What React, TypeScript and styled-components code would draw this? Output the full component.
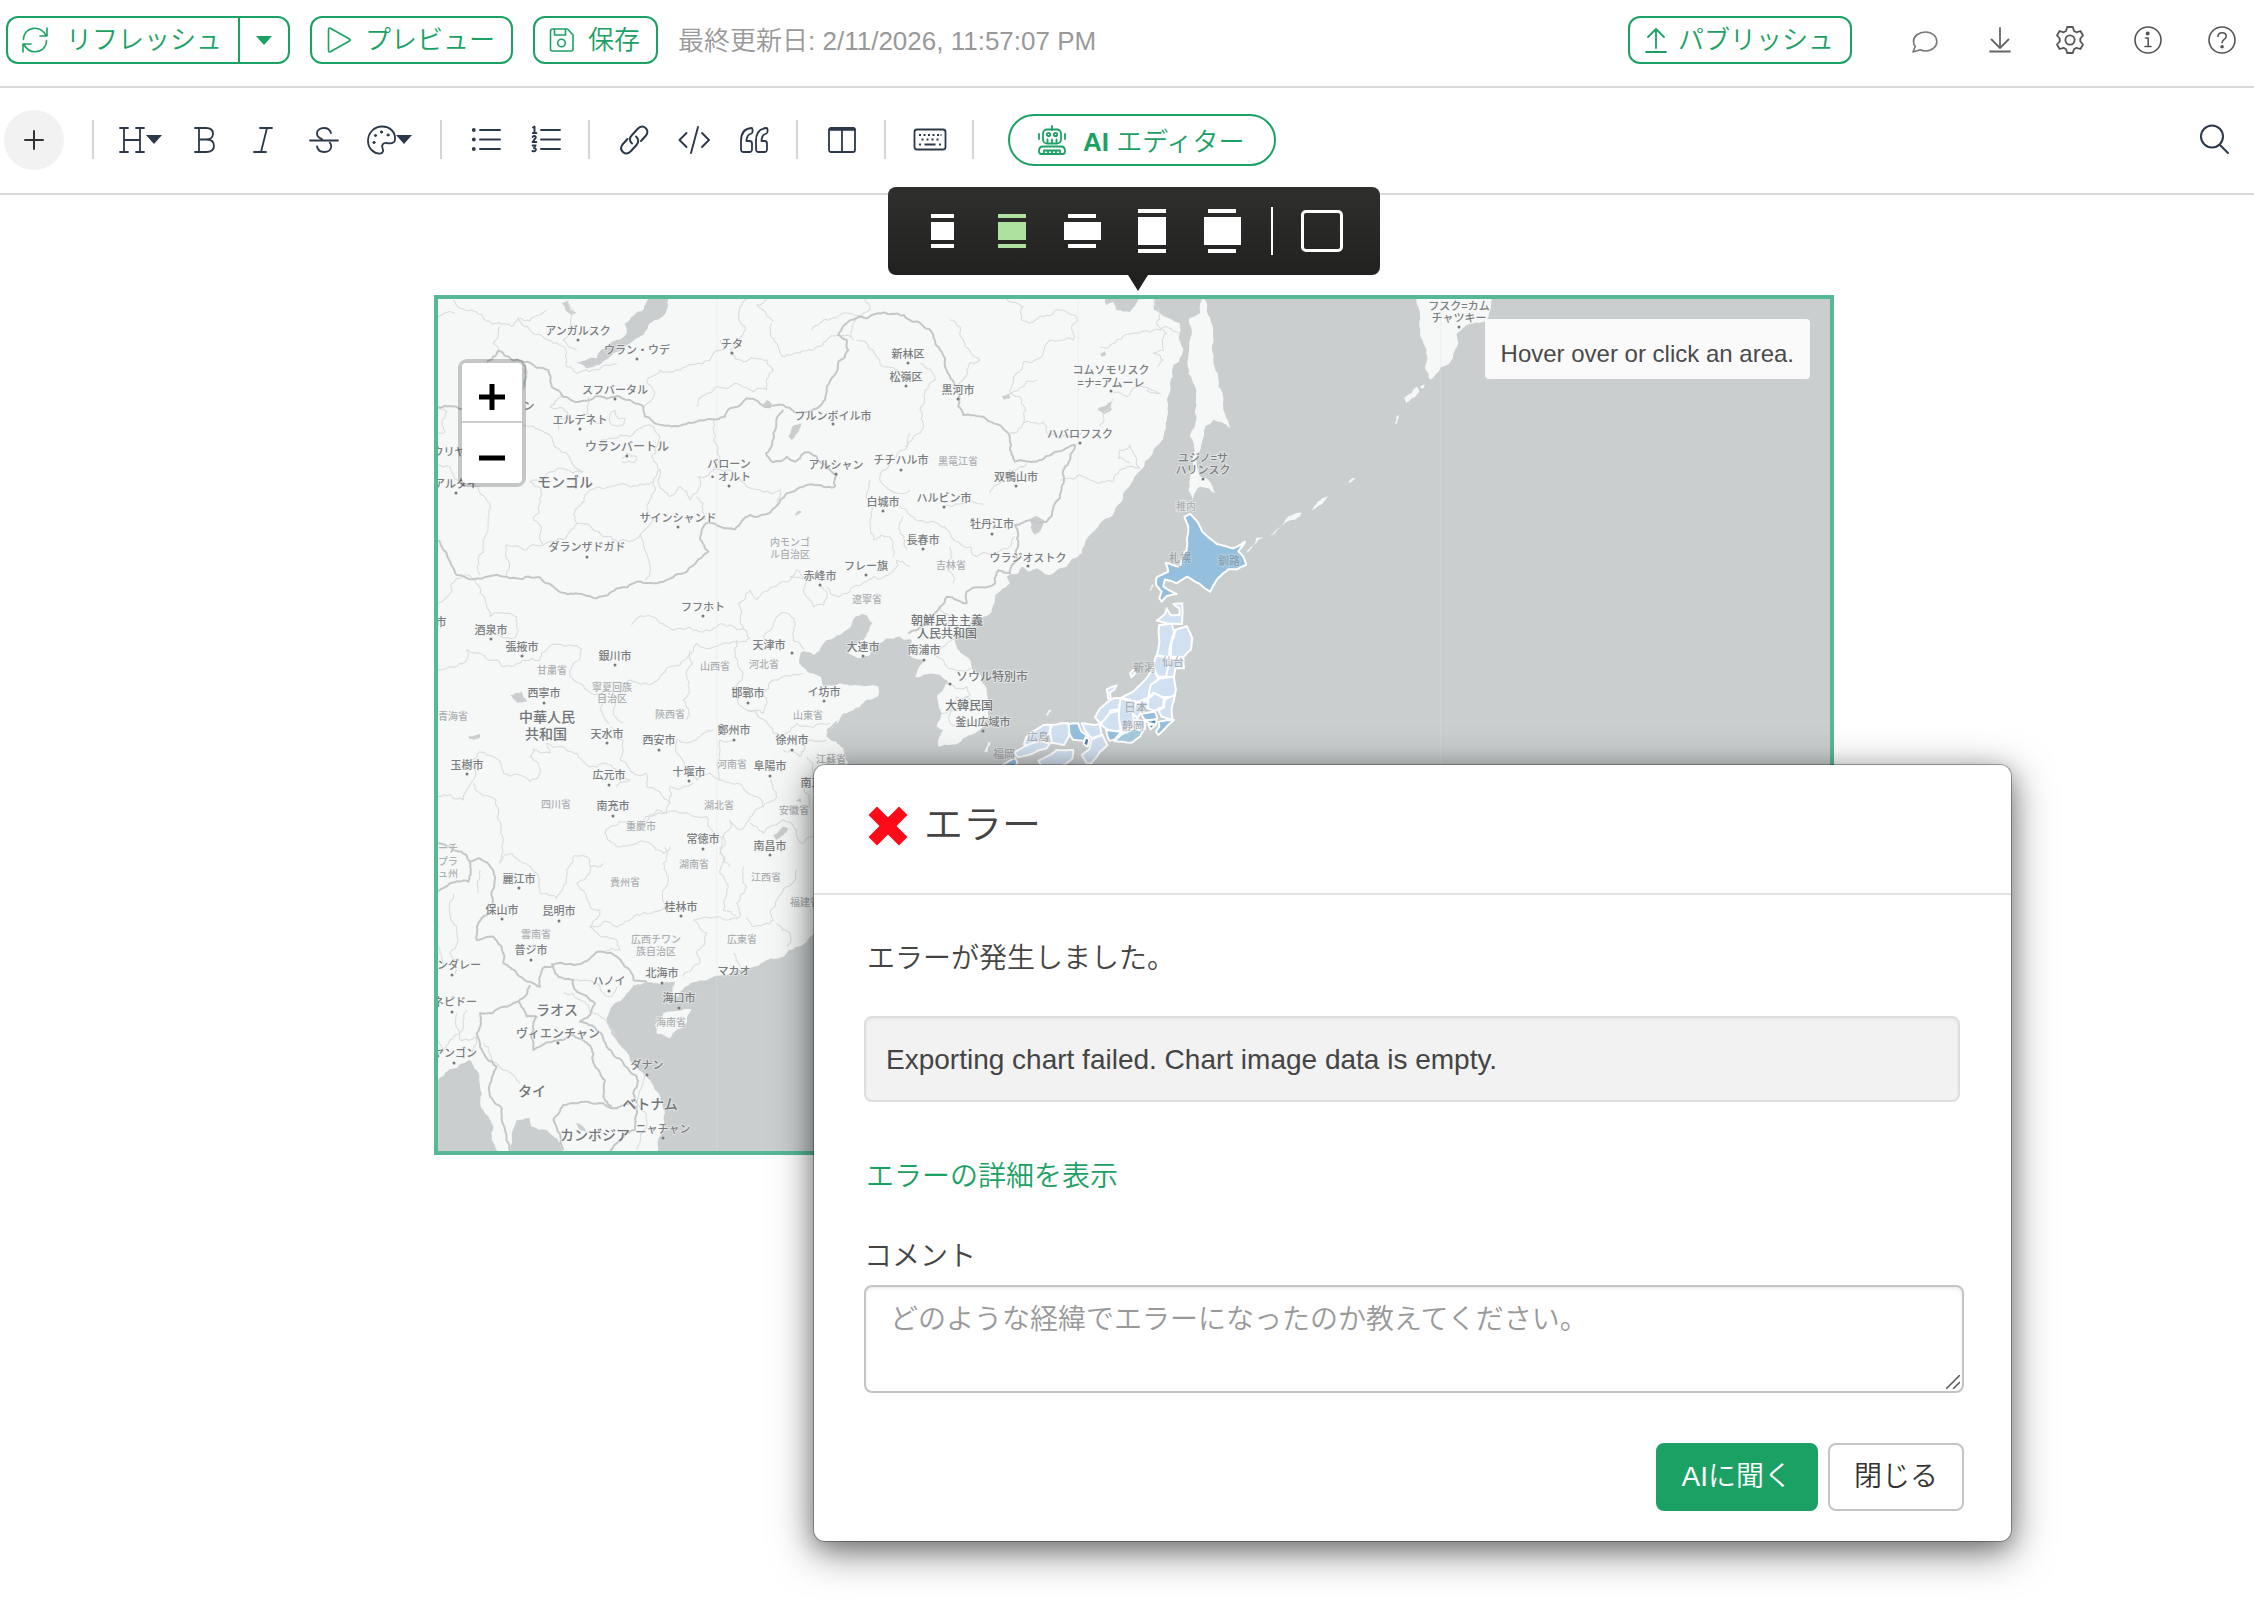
import React from "react";
import styled, { createGlobalStyle, css } from "styled-components";

const GREEN = "#1ca165";
const INK = "#2b3849";

const GlobalStyle = createGlobalStyle`
  *, *::before, *::after { box-sizing: border-box; }
  body {
    margin: 0;
    background: #fff;
    color: #444;
    font-family: "Liberation Sans", "Noto Sans CJK JP", sans-serif;
    font-size: 28px;
    font-weight: 350;
  }
  button, textarea { font: inherit; }
  button { cursor: pointer; }
`;

/* ---------- Icons ---------- */

const Svg = styled.svg`
  display: block;
  flex: none;
  overflow: visible;
  fill: none;
  stroke: currentColor;
  stroke-linecap: round;
  stroke-linejoin: round;
`;

type IconProps = { children: React.ReactNode; w?: number; h?: number; sw?: number };
const Icon = ({ children, w = 28, h = 28, sw = 2 }: IconProps) => (
  <Svg width={w} height={h} viewBox={`0 0 ${w} ${h}`} strokeWidth={sw} aria-hidden="true">
    {children}
  </Svg>
);

const RefreshIcon = () => (
  <Icon w={26} h={26} sw={1.6}>
    <path d="M1.5 12.5C1.500 5.500 7 1.200 13 1.200c5 0 8.500 2.600 11 7.300M25 1v8h-7" />
    <path d="M24.500 13.500c0 7-5.500 11.300-11.500 11.300-5 0-8.500-2.600-11-7.300M1 25v-8h8" />
  </Icon>
);
const PlayIcon = () => (
  <Icon w={26} h={26} sw={1.6}>
    <path d="M2.500 2.200v21.600c0 1 1 1.500 1.800 1L23.500 14c.9-.5.9-1.500 0-2L4.300 1.200c-.8-.5-1.800 0-1.800 1z" />
  </Icon>
);
const SaveIcon = () => (
  <Icon w={26} h={26} sw={1.6}>
    <path d="M3.500 2h15l5.500 6v14a2 2 0 0 1-2 2H3.500a2 2 0 0 1-2-2V4a2 2 0 0 1 2-2zM5.500 2v6h11V2" />
    <circle cx="12.500" cy="16" r="3.800" />
  </Icon>
);
const UploadIcon = () => (
  <Icon w={26} h={26} sw={1.8}>
    <path d="M12 2v19M4 10l8-8 8 8M2 25h20" />
  </Icon>
);
const CommentIcon = () => (
  <Icon sw={1.6}>
    <path d="M13.500 6c6.600 0 11.300 4.200 11.300 9.400S20 25 13.500 25c-2 0-3.800-.4-5.300-1.200L1 26l2.200-5.500C2 19 1.500 17.300 1.500 15.400 1.500 10.200 6.900 6 13.500 6z" />
  </Icon>
);
const DownloadIcon = () => (
  <Icon sw={1.8}>
    <path d="M14 2v20M5.500 13.500L14 22l8.500-8.500M4 25.500h20" />
  </Icon>
);
const GearIcon = () => (
  <Icon sw={1.8}>
    <path d="M7.200 1h5.600l1.200 4 2.400 1.300 4-1.300 2.600 4.500-2.700 3v3l2.700 3-2.600 4.500-4-1.200-2.400 1.400-1.200 3.800H7.200L6 23.200l-2.400-1.400-4 1.200L-3 18.500l2.700-3v-3l-2.700-3L-.4 5l4 1.300L6 5z" />
    <circle cx="10" cy="14" r="4.600" />
  </Icon>
);
const InfoIcon = () => (
  <Icon sw={1.6}>
    <circle cx="14" cy="14" r="13" />
    <circle cx="13.700" cy="7.500" r="1.200" fill="currentColor" />
    <path d="M11.500 12h2.700v8M11 20.500h6" />
  </Icon>
);
const HelpIcon = () => (
  <Icon sw={1.6}>
    <circle cx="14" cy="14" r="13" />
    <path d="M10 10.500c0-2.300 1.700-3.700 4-3.700s4.200 1.400 4.200 3.600c0 3-4.100 3.200-4.100 6.300" />
    <circle cx="14.100" cy="20.700" r="1" fill="currentColor" />
  </Icon>
);
const SearchIcon = () => (
  <Icon sw={2}>
    <circle cx="12" cy="10.500" r="11" />
    <path d="M20 19l8 8" />
  </Icon>
);
const PlusIcon = () => (
  <Icon w={18} h={18} sw={2}>
    <path d="M9 0v18M0 9h18" />
  </Icon>
);
const CaretIcon = () => (
  <Icon w={16} h={9} sw={0}>
    <path d="M0 0h16L8 9z" fill="currentColor" />
  </Icon>
);
const HeadingIcon = () => (
  <Icon sw={1.8}>
    <path d="M4 2h8M20 2h8M4 26h8M20 26h8M8 2v24M24 2v24M8 14h16" />
  </Icon>
);
const BoldIcon = () => (
  <Icon sw={1.8}>
    <path d="M3 2h11c4 0 7 2 7 5.700S18 13.500 14 13.500H7M14 13.500c5 0 8 2.300 8 6.200S19 26 14 26H3M7 2v24" />
  </Icon>
);
const ItalicIcon = () => (
  <Icon sw={1.8}>
    <path d="M10 2h12M4 26h12M17 2l-6 24" />
  </Icon>
);
const StrikeIcon = () => (
  <Icon sw={1.8}>
    <path d="M2 14.500h28M23 7c-1-3.300-3.600-5-7-5-4 0-7 2.200-7 5.500 0 3 2.300 4.600 5 5.500M9 20.500c.7 3.600 3.300 5.500 7.200 5.500 4 0 7-2.200 7-5.800 0-1.700-.6-2.700-1.500-3.500" />
  </Icon>
);
const PaletteIcon = () => (
  <Icon sw={1.8}>
    <path d="M16 .5C8 .5 2 7 2 15c0 7.500 6 13 12.500 12.500 3-.3 3-3 2-5.500-1.200-3 1-5.500 4-5 3 .4 8 1 8.500-3C29.800 6 24 .5 16 .5z" />
    <g fill="currentColor" strokeWidth="1">
      <circle cx="8" cy="16.500" r="1.100" />
      <circle cx="9.500" cy="9.500" r="1.100" />
      <circle cx="15.500" cy="6" r="1.100" />
      <circle cx="22" cy="9" r="1.100" />
    </g>
  </Icon>
);
const BulletsIcon = () => (
  <Icon sw={1.9}>
    <path d="M8 4h20M8 13.500h20M8 23h20" />
    <g fill="currentColor" stroke="none">
      <circle cx="1.800" cy="4" r="1.900" />
      <circle cx="1.800" cy="13.500" r="1.900" />
      <circle cx="1.800" cy="23" r="1.900" />
    </g>
  </Icon>
);
const NumbersIcon = () => (
  <Icon sw={1.9}>
    <path d="M9 4h19M9 13.500h19M9 23h19" />
    <path d="M1 1.500l1.500-1v6M.8 7h3.600M.6 11c.6-1.500 3.600-1.200 3.200.6L.6 16h3.800M.6 19.500h3l-1.600 2.600c2.800 0 2.500 4-1.600 2.900" />
  </Icon>
);
const LinkIcon = () => (
  <Icon sw={2}>
    <path d="M12 17.500c-3-2.500-2.500-6 0-8.500l6-6.500c5.500-5 12 1.500 8 7l-5 5.500" />
    <path d="M16 10.500c3 2.500 2.800 6 .5 8.500l-6 6.500c-5.500 5-12-1.500-8-7l5-5.500" />
  </Icon>
);
const CodeIcon = () => (
  <Icon sw={1.9}>
    <path d="M6.500 7L-.500 14l7 7M22 7l7 7-7 7M18 1l-7 26" />
  </Icon>
);
const QuoteIcon = () => (
  <Icon sw={1.8}>
    <path d="M11.500 2C4 2.500 1 8 1 15v8.500A2.500 2.500 0 0 0 3.500 26h6a2.500 2.500 0 0 0 2.500-2.500v-6A2.500 2.500 0 0 0 9.500 15H6.500c0-4 1-6.500 5-7.500 1.500-.5 1.500-5.500 0-5.500z" />
    <path d="M26.500 2C19 2.500 16 8 16 15v8.500a2.500 2.500 0 0 0 2.500 2.500h6a2.500 2.500 0 0 0 2.500-2.500v-6a2.500 2.500 0 0 0-2.500-2.500h-3c0-4 1-6.500 5-7.500 1.500-.5 1.500-5.500 0-5.500z" />
  </Icon>
);
const ColumnsIcon = () => (
  <Icon sw={1.8}>
    <rect x="1" y="2" width="26" height="24" rx="2" />
    <path d="M14 3v23" />
    <path d="M2 3.200h24" strokeWidth="3" />
  </Icon>
);
const KeyboardIcon = () => (
  <Icon sw={1.8}>
    <rect x="-1.500" y="3.500" width="31" height="20" rx="2.500" />
    <path d="M3 9h2M7.500 9h2M12 9h2M16.500 9h2M21 9h2M24.500 9h1M5.500 13.500h2M10.500 13.500h2M15.500 13.500h2M20.500 13.500h2M3 18.500h2M8.500 18.500h11M23 18.500h2" strokeWidth="2.200" strokeLinecap="butt" />
  </Icon>
);
const RobotIcon = () => (
  <Icon w={28} h={30} sw={1.800}>
    <path d="M14 1v4M1 9v5M27 9v5" />
    <rect x="5" y="4.500" width="18" height="14" rx="4" />
    <circle cx="10.500" cy="9.500" r="1.700" />
    <circle cx="17.500" cy="9.500" r="1.700" />
    <path d="M9.500 14.500v3M14 14.500v3M18.500 14.500v3" />
    <path d="M5 21.500h18c2.500 0 4 2 4 4.500s-1 3-2 3H3c-1 0-2-.5-2-3s1.500-4.500 4-4.500z" />
    <path d="M6 28.500V25.500h16v3M10 25.500v3M14 25.500v3M18 25.500v3" />
  </Icon>
);
const CrossIcon = () => (
  <Icon w={40} h={40} sw={0}>
    <path fill="#ff0a18" d="M9 .5l11 11 11-11L39.500 9l-11 11 11 11L31 39.500l-11-11-11 11L.5 31l11-11L.5 9z" />
  </Icon>
);

/* ---------- Header ---------- */

const Page = styled.div`
  min-height: 100vh;
`;

const TopBar = styled.header`
  display: flex;
  align-items: center;
  gap: 20px;
  padding: 16px 18px 22px 6px;
  border-bottom: 2px solid #d9d9d9;
  font-size: 26px;
  line-height: 46px;
`;

const outlined = css`
  border: 2px solid ${GREEN};
  background: #fff;
  color: ${GREEN};
`;

const OutlineButton = styled.button<{ $gap?: number }>`
  ${outlined}
  display: flex;
  align-items: center;
  height: 48px;
  gap: ${(p) => p.$gap ?? 13}px;
  padding: 0 16px 0 14px;
  border-radius: 12px;
  white-space: nowrap;
`;

const SplitButton = styled.div`
  display: flex;
  & > :first-child { border-radius: 12px 0 0 12px; border-right: 0; }
`;

const SplitCaret = styled.button`
  ${outlined}
  display: flex;
  align-items: center;
  justify-content: center;
  width: 52px;
  height: 48px;
  padding: 0;
  border-radius: 0 12px 12px 0;
`;

const Updated = styled.span`
  padding-top: 2px;
  color: #999;
  white-space: nowrap;
`;

const TopActions = styled.div`
  display: flex;
  align-items: center;
  gap: 46px;
  margin-left: auto;
`;

const PublishSlot = styled.div`
  margin-right: 14px;
`;

const IconButton = styled.button<{ $tone?: string }>`
  display: flex;
  align-items: center;
  gap: 2px;
  padding: 0;
  border: 0;
  background: none;
  color: ${(p) => p.$tone ?? INK};
`;

/* ---------- Format toolbar ---------- */

const Toolbar = styled.div`
  display: flex;
  align-items: center;
  height: 107px;
  padding: 0 26px 2px 4px;
  border-bottom: 2px solid #d9d9d9;
`;

const AddButton = styled.button`
  display: flex;
  align-items: center;
  justify-content: center;
  width: 60px;
  height: 60px;
  border: 0;
  border-radius: 50%;
  background: #f2f2f2;
  color: #333;
`;

const ToolGroup = styled.div<{ $gap?: number }>`
  display: flex;
  align-items: center;
  gap: ${(p) => p.$gap ?? 32}px;
`;

const Separator = styled.span<{ $after?: number }>`
  width: 2px;
  height: 39px;
  margin: 0 ${(p) => p.$after ?? 30}px 0 28px;
  background: #d4d4d4;
`;

const AiButton = styled.button`
  ${outlined}
  display: flex;
  align-items: center;
  gap: 17px;
  height: 52px;
  padding: 0 30px 0 28px;
  border-radius: 26px;
  font-size: 26px;
  white-space: nowrap;
  strong { font-weight: 700; }
`;

const SearchSlot = styled.div`
  margin-left: auto;
`;

/* ---------- Chart block ---------- */

const Canvas = styled.main`
  display: flex;
  justify-content: center;
  padding: 100px 0 100px 14px;
`;

const ChartFrame = styled.section`
  position: relative;
  width: 100%;
  max-width: 1400px;
  border: 4px solid #57b896;
`;

const SizeBubble = styled.div`
  position: absolute;
  bottom: calc(100% + 24px);
  left: 50%;
  transform: translateX(-50%);
  display: flex;
  align-items: center;
  height: 88px;
  padding: 0 23px 0 19px;
  border-radius: 8px;
  background: linear-gradient(#2f2f2e, #212120);
  &::after {
    content: "";
    position: absolute;
    top: 100%;
    left: 50%;
    margin-left: -6px;
    border: 10px solid transparent;
    border-top: 16px solid #212120;
    border-bottom: 0;
  }
`;

const BubbleButton = styled.button<{ $active?: boolean }>`
  display: flex;
  flex-direction: column;
  align-items: center;
  justify-content: center;
  gap: 4px;
  width: 70px;
  height: 88px;
  padding: 0;
  border: 0;
  background: none;
  color: ${(p) => (p.$active ? "#aee1a0" : "#fff")};
`;

const Bar = styled.span<{ $w: number; $h: number }>`
  width: ${(p) => p.$w}px;
  height: ${(p) => p.$h}px;
  background: currentColor;
`;

const BubbleRule = styled.span`
  width: 2px;
  height: 48px;
  margin: 0 14px;
  background: #fff;
`;

const FrameGlyph = styled.span`
  width: 42px;
  height: 42px;
  border: 3px solid #fff;
  border-radius: 5px;
`;

const sizes = [
  { name: "小", bar: 23, box: 23, h: 18 },
  { name: "標準", bar: 28, box: 28, h: 18, active: true },
  { name: "幅広", bar: 28, box: 37, h: 18 },
  { name: "縦長", bar: 28, box: 28, h: 28 },
  { name: "全幅", bar: 28, box: 37, h: 28 },
];

const ZoomControl = styled.div`
  position: absolute;
  top: 60px;
  left: 20px;
  width: 68px;
  border: 4px solid rgba(0, 0, 0, 0.2);
  border-radius: 9px;
  background-clip: padding-box;
`;

const ZoomButton = styled.button`
  display: flex;
  align-items: center;
  justify-content: center;
  width: 60px;
  height: 60px;
  padding: 10px 0 0;
  border: 0;
  background: #fff;
  color: #000;
  &:first-child { border-bottom: 2px solid #ccc; border-radius: 4px 4px 0 0; }
  &:last-child { border-radius: 0 0 4px 4px; }
`;

const MapHint = styled.div`
  position: absolute;
  top: 20px;
  right: 20px;
  padding: 20px 16px 10px;
  border-radius: 4px;
  background: rgba(255, 255, 255, 0.9);
  font-size: 24px;
  line-height: 30px;
  color: #4a4a4a;
`;

const MapSvg = styled.svg`
  display: block;
  width: 100%;
  height: auto;
  background: #cacecf;
`;

const MapText = styled.text<{ $tone: string }>`
  fill: ${(p) => p.$tone};
  stroke: #f6f8f8;
  stroke-opacity: 0.5;
  stroke-width: 2px;
  paint-order: stroke;
  text-anchor: middle;
  dominant-baseline: central;
  font-family: "Noto Sans CJK JP", sans-serif;
  font-weight: 500;
`;

/* ---------- Map geometry (three units per pixel, one offset per tile) ---------- */

type Pt = [number, number];
const TILE: Record<string, Pt> = { a: [0, 0], b: [1410, 0], c: [0, 1290], d: [2850, 0] };

const pts = (tile: string, s: string): Pt[] =>
  s.trim().split(/\s+/).map((p) => {
    const [x, y] = p.split(",").map(Number);
    return [x + TILE[tile][0], y + TILE[tile][1]];
  });

const noise = (x: number, y: number) => {
  const v = Math.sin(x * 12.9898 + y * 78.233) * 43758.5453;
  return (v - Math.floor(v)) * 2 - 1;
};

// Midpoint displacement gives straight runs the ragged look of a coast or a river.
const rough = (list: Pt[], amp: number, closed = false): string => {
  let cur = closed ? [...list, list[0]] : list;
  for (let pass = 0; pass < 3; pass++) {
    const next: Pt[] = [cur[0]];
    for (let i = 1; i < cur.length; i++) {
      const [ax, ay] = cur[i - 1];
      const [bx, by] = cur[i];
      const len = Math.hypot(bx - ax, by - ay);
      if (len > 9) {
        const k = noise(ax + bx, ay + by) * amp;
        next.push([(ax + bx) / 2 - (by - ay) * k, (ay + by) / 2 + (bx - ax) * k]);
      }
      next.push(cur[i]);
    }
    cur = next;
  }
  return "M" + cur.map(([x, y]) => `${x.toFixed(1)} ${y.toFixed(1)}`).join("L") + (closed ? "Z" : "");
};

const mainland: Pt[] = [
  ...pts("a", "-1600,-400 1000,-400 2000,-40"),
  ...pts("b", "615,20 618,45 640,35 650,60 690,65 715,28 765,20 762,60 785,75 840,100 838,130 850,180 838,215 820,225 818,260 800,330 797,400 780,460 750,500 728,535 700,570 660,640 600,700 545,790 500,830 450,855 410,835 385,845 365,830 355,850 320,860 330,880 285,915 275,965 215,995 165,1045 175,1080 210,1110 215,1135 240,1150 260,1195 268,1250 250,1310 200,1340 150,1365 115,1370 130,1320 110,1310 125,1270 112,1215 145,1175 120,1155 45,1160 75,1110 25,1090 35,1050 0,1040"),
  ...pts("a", "1370,1045 1345,1060 1320,1095 1285,1105 1255,1090 1300,1050 1328,1000 1310,975 1275,980 1250,1020 1190,1050 1170,1080 1150,1095 1115,1085 1107,1115 1140,1150 1172,1160 1182,1190 1230,1180 1275,1185 1345,1190 1343,1220 1290,1250 1240,1270 1200,1320"),
  ...pts("c", "1225,0 1190,30 1190,50 1240,85 1255,125 1230,300 1200,500 1152,640 1100,680 1060,710 1010,720 960,745 890,765 800,785 765,800 745,830 725,820 735,785 700,790 650,785 610,795 590,820 545,860 530,910 550,950 570,975 600,1020 640,1060 660,1080 690,1130 705,1180 705,1230 680,1310 410,1310 390,1270 365,1245 350,1230 305,1220 300,1195 260,1200 240,1310 210,1310 185,1260 190,1220 165,1180 150,1100 140,1050 120,1020 100,1030 55,1050 24,1080 0,1085 -1600,1085"),
];

const islands: Pt[][] = [
  pts("b", "905,20 915,30 935,100 940,210 955,290 970,350 990,415 940,390 915,410 905,460 890,520 900,560 930,575 948,610 900,590 878,632 865,600 880,540 885,480 870,440 885,370 880,280 862,220 870,150 868,85 900,70"),
  pts("d", "104,20 335,20 330,60 320,95 300,98 260,105 230,130 235,160 215,210 180,235 150,270 135,235 130,160 118,110"),
  pts("c", "675,915 700,880 785,868 770,910 720,955 680,940"),
  pts("d", "72,325 95,310 110,290 118,305 95,325 78,340"),
  pts("d", "120,290 134,283 128,297"),
  pts("d", "44,400 50,378 57,376 50,402"),
  pts("b", "1110,738 1160,685 1205,668 1200,680 1150,705"),
  pts("b", "1235,660 1265,625 1284,620 1262,645"),
  pts("b", "1040,788 1070,742 1090,742 1062,765"),
  pts("b", "1342,580 1360,563 1366,566"),
  pts("b", "252,1385 265,1355 272,1358 262,1388"),
  pts("b", "437,1275 450,1258 454,1262 444,1277"),
  pts("b", "748,900 757,882 760,888 752,903"),
];

const lakes: Pt[][] = [
  pts("a", "660,20 715,20 690,85 650,120 600,160 550,190 510,225 470,235 435,215 500,205 540,160 590,130 585,100 640,60"),
  pts("a", "275,212 288,225 288,285 278,300"),
  pts("a", "1075,440 1095,405 1112,400 1108,420 1085,450"),
  pts("a", "1000,345 1010,330 1025,340 1022,355"),
  pts("a", "240,1215 275,1205 292,1235 262,1238"),
  pts("a", "1095,672 1110,662 1115,666 1098,678"),
  pts("b", "390,690 410,678 432,690 425,715 405,735 392,712"),
  pts("b", "592,360 620,345 640,320 635,360 610,375"),
  pts("b", "602,190 615,184 618,196 604,200"),
  pts("b", "305,318 325,310 330,325 312,330"),
  pts("c", "115,48 150,42 148,55 118,56"),
  pts("c", "1030,345 1060,320 1075,325 1040,360"),
  pts("c", "436,1208 460,1220 478,1240 455,1232"),
  pts("c", "1090,245 1112,235 1115,248"),
  pts("a", "395,40 415,30 420,60 440,68 425,75 408,62"),
];

const borders: Pt[][] = [
  [
    ...pts("a", "170,215 205,182 225,198 275,212 315,230 355,240 365,290 400,320 460,332 500,318 560,318 600,330 640,350 645,380 675,400 755,406 800,395 850,388 885,380 900,355 950,325 985,335 1010,352 1060,345 1100,370 1145,362 1185,330 1190,290 1225,215 1255,180 1250,150 1225,135 1262,90 1310,85 1345,70 1400,70"),
    ...pts("b", "30,90 70,108 100,135 125,185 135,230 170,300 175,350 190,375 250,380 280,400 325,430 330,480 345,515 410,515 470,485 525,465 510,510 490,540 485,590 460,650 440,695 390,690 345,705 355,760 350,810 330,850 295,840 285,880 200,905 200,940 140,920 120,950 105,970 25,1030"),
  ],
  pts("a", "24,750 50,790 80,855 180,858 260,865 330,862 370,890 430,912 470,918 500,925 560,895 620,875 700,875 760,850 800,815 835,785 810,745 835,697 870,710 915,718 960,675 1010,672 1050,630 1070,610 1110,592 1170,585 1215,590 1220,555 1190,525 1160,500 1120,490 1095,515 1070,500 1025,515 1008,490 1030,430 1060,360"),
  pts("a", "0,345 60,348 100,358"),
  pts("c", "24,370 60,380 95,395 120,425 150,415 180,440 195,470 190,560 160,590 140,620 140,660 190,650 215,680 220,730 260,760 300,785 330,800 345,740 385,730 430,735 480,715 515,695 560,710 585,740 610,780 650,785"),
  pts("c", "24,515 60,490 115,485 120,425"),
  pts("c", "300,795 265,845 290,890 320,890 305,940 310,990 345,970 400,960 430,945 460,960 490,1000 495,1040 525,1080 520,1130 545,1160"),
  pts("c", "365,730 375,760 430,780 440,815 495,850 480,885 450,905 500,930 530,980 580,1030 620,1070 610,1120 620,1150"),
  pts("c", "265,845 220,860 150,880 140,940 150,980 200,1040 185,1080 180,1130 215,1165 225,1230 240,1293"),
  pts("c", "400,1290 370,1200 400,1155 470,1145 520,1150 545,1165 600,1150 620,1160 615,1230 560,1270 540,1293"),
];

const regions: Pt[][] = [
  pts("a", "70,30 90,55 140,65 165,90 210,100 245,110 265,85 300,120 340,140 370,160 410,185"),
  pts("a", "265,85 330,75 350,60"),
  pts("a", "205,182 190,160 210,110"),
  pts("a", "410,35 425,80 420,130 400,150 440,180"),
  pts("a", "24,85 60,65 75,70"),
  pts("a", "410,185 410,230 440,250 480,245 530,225 560,220"),
  pts("a", "640,350 665,330 670,300 650,275 690,240 770,230 850,190 880,180 870,150"),
  pts("a", "950,27 930,50 945,110 920,160 900,190 940,215 1010,210 1030,240 1010,300 970,305 920,280 865,290 830,310 800,350"),
  pts("a", "1025,100 1040,160 1060,200 1110,190 1150,180 1190,150 1225,135 1270,150 1280,85"),
  pts("a", "1030,95 980,45 1010,27"),
  pts("a", "1145,120 1180,90 1230,75 1300,70 1320,60 1305,27"),
  pts("a", "1280,150 1310,160 1340,200 1370,230 1410,245"),
  pts("a", "400,320 380,330 360,350 410,365 420,390 380,395 385,420"),
  pts("a", "280,405 330,420 360,435 390,480 420,510 460,545 400,535 370,545 300,575 325,590 330,640 310,690 340,765"),
  pts("a", "24,355 50,365 35,400 45,425 24,430"),
  pts("a", "24,525 60,530 80,570 130,580 180,640 175,700 160,760 150,855"),
  pts("a", "230,860 228,765 290,780 340,765 400,750 440,700 490,720 520,740 560,755 630,735 645,870"),
  pts("a", "440,700 435,660 480,600 540,590 600,590 640,585 670,575 660,630 670,690 630,735"),
  pts("a", "670,575 690,540 665,500 680,470 690,440 670,410 620,420 600,440 545,445 515,450 510,480"),
  pts("a", "690,540 700,600 720,620 745,590 780,630 810,590 805,560 850,540 870,500 850,450 850,390"),
  pts("a", "850,540 920,560 950,590 1050,600 1040,640"),
  pts("a", "545,405 540,375 555,360 560,380 585,385 580,405 545,405"),
  pts("a", "575,505 590,490 620,500 615,515 575,515"),
  pts("a", "475,320 480,380 520,400"),
  pts("a", "800,620 820,640 825,690"),
  pts("a", "24,940 60,910 80,865 120,858 150,910 180,980 230,970 260,980 265,1020 250,1045 180,1035"),
  pts("a", "24,1140 60,1130 100,1120 110,1080 150,1090 200,1110 220,1130 280,1110 330,1110 350,1080 420,1065 455,1075 430,1120 420,1160 470,1200 520,1210 510,1260 540,1300"),
  pts("a", "605,1005 620,985 660,978 690,1000 750,1015 800,1020 850,1015 900,1005 940,1015 960,1045 900,1060 800,1060 720,1130 690,1160 640,1180 600,1170 570,1200 550,1260 580,1300"),
  pts("a", "780,1080 770,1160 760,1230 770,1290"),
  pts("a", "940,1015 935,970 925,940 960,900 980,930 1030,890 1080,870 1130,865 1130,920 1150,950 1180,945 1190,905 1170,880"),
  pts("a", "1000,1045 1040,980 1070,970 1095,1000 1090,1050 1120,1080"),
  pts("a", "1190,890 1225,920 1270,890 1330,860 1380,850 1400,810 1440,830"),
  pts("a", "920,1050 915,1100 940,1150 915,1190 950,1260 1000,1270 1000,1210 1060,1160 1120,1150"),
  pts("a", "950,1260 1030,1330 1100,1300 1200,1300"),
  pts("a", "1320,570 1310,610 1320,690 1330,750 1380,740 1390,800"),
  pts("a", "1440,430 1400,500 1350,560 1380,600 1410,610 1440,600"),
  pts("a", "1130,870 1100,840 1080,860"),
  pts("b", "0,650 40,680 110,700 150,730 180,760 210,770 230,800 290,790 330,770 345,740"),
  pts("b", "60,220 105,270 75,300 60,360 70,410 40,440 15,470"),
  pts("b", "150,90 190,150 240,210 200,240 170,290"),
  pts("b", "320,27 370,50 365,90 390,100 430,80 500,65 530,80 520,150 450,150 430,190 370,215 340,260 330,310 360,320 370,400 330,430"),
  pts("b", "370,400 430,395 440,430 520,440 545,430"),
  pts("b", "480,570 540,555 600,580 640,575 660,540 720,535 700,490 690,465 660,480 655,505 690,520"),
  pts("b", "600,170 650,150 700,130 760,120 800,110 835,130"),
  pts("b", "760,30 780,70 770,100 800,130 790,180 760,190 790,210 770,230"),
  pts("b", "640,310 680,320 720,290 780,310 740,300"),
  pts("b", "10,680 0,730 20,780"),
  pts("b", "130,650 230,640 250,645"),
  pts("b", "330,310 370,290 410,270"),
  pts("b", "600,410 610,380 630,350"),
  pts("b", "150,770 140,830 160,880"),
  pts("b", "120,950 150,980 140,1030 170,1050 130,1070 110,1100 140,1130 215,1135"),
  pts("b", "125,1270 170,1260 200,1220 250,1230"),
  pts("b", "140,1180 200,1190 210,1215 170,1220 150,1300 200,1310 230,1290 260,1290"),
  pts("b", "270,610 300,580 330,540 380,520"),
  pts("c", "24,230 60,225 100,240 130,180 120,120 150,95 190,110 220,160 300,185 330,160 300,110 310,85 360,100 350,70 390,80 440,100 480,140 550,145 600,180 560,200"),
  pts("c", "130,190 180,230 205,300 215,380 210,430 240,400 280,430 320,460 330,520 380,535 400,500 410,450 430,410 470,410 480,440 520,430"),
  pts("c", "540,20 580,60 570,120 600,150 650,160 650,200 700,230 720,250 710,280 660,290 630,320 600,310 540,320 525,340 560,380 600,375 660,370 700,400 720,380"),
  pts("c", "640,300 680,270 750,280 830,290 850,340 880,350 870,400 900,440"),
  pts("c", "740,60 750,110 780,160 800,180 840,160 870,180 860,130 870,60 910,60"),
  pts("c", "740,60 800,60 850,30"),
  pts("c", "870,180 920,190 980,230 1000,260 1040,230 1020,180"),
  pts("c", "720,250 720,200 790,190"),
  pts("c", "705,380 700,430 710,500 705,560 660,580 600,600 560,620 480,620 510,570 480,560 440,490 460,480 480,440"),
  pts("c", "880,350 885,420 870,460 890,520 880,570 920,590"),
  pts("c", "940,440 950,500 920,550 930,590 860,590 790,600 830,640 800,700 810,730 760,770"),
  pts("c", "1000,260 960,290 930,330 900,300 880,350"),
  pts("c", "960,310 1000,340 1060,300 1100,330 1120,370 1150,350"),
  pts("c", "1100,450 1070,500 1040,540 1030,600 970,620 950,590"),
  pts("c", "1070,680 1080,640 1040,610"),
  pts("c", "1060,90 1110,110 1130,60 1190,60"),
  pts("c", "1130,110 1150,160 1120,200 1140,260"),
  pts("c", "480,620 520,650 560,660 570,690 520,695"),
  pts("c", "150,450 145,520"),
  pts("c", "70,520 60,580 80,620 60,700 75,760"),
  pts("c", "24,620 30,700 40,740"),
  pts("c", "110,870 100,920 60,960 40,990 24,940"),
  pts("c", "80,880 90,960 140,950 130,1010"),
  pts("c", "160,970 200,1030 230,1050 270,1090"),
  pts("c", "400,820 450,840 490,880 560,960"),
  pts("c", "430,780 500,790 540,830 560,800"),
  pts("c", "640,1060 620,1150 650,1200 620,1290"),
  pts("c", "910,700 930,740"),
];

const LIGHT = "#d2e1f1";
const MID = "#94bfdd";
const TEAL = "#a4cbdf";
const DARK = "#4a7db8";
const prefectures: { fill: string; shape: string }[] = [
  { fill: MID, shape: "853,680 870,672 895,700 905,722 950,762 1000,775 1035,755 1015,785 1030,800 1038,825 1010,838 985,838 950,870 930,905 862,860 830,880 795,868 790,890 830,912 800,918 785,935 778,925 785,905 768,885 770,862 805,845 797,818 840,832 845,800 860,780 862,740 865,710" },
  { fill: LIGHT, shape: "820,942 847,940 846,1002 800,1000 770,992 795,972 800,955 812,975 838,975 838,955" },
  { fill: LIGHT, shape: "778,1005 815,1002 823,1025 812,1060 808,1102 770,1095 778,1060" },
  { fill: LIGHT, shape: "827,1020 860,1008 877,1045 872,1080 850,1102 812,1100 814,1060" },
  { fill: LIGHT, shape: "812,1105 850,1105 852,1135 825,1135 822,1165 790,1160 800,1130" },
  { fill: LIGHT, shape: "768,1098 808,1105 798,1160 775,1160 760,1130" },
  { fill: LIGHT, shape: "758,1135 775,1165 750,1195 748,1222 715,1235 665,1222 700,1205 735,1170" },
  { fill: LIGHT, shape: "752,1185 780,1165 822,1160 828,1200 822,1222 790,1222 760,1208 745,1222" },
  { fill: LIGHT, shape: "745,1225 765,1210 792,1225 790,1250 765,1262 742,1255" },
  { fill: LIGHT, shape: "795,1228 825,1215 815,1255 818,1290 785,1280 775,1262 792,1252" },
  { fill: LIGHT, shape: "708,1238 742,1232 742,1256 722,1268 712,1285 698,1270" },
  { fill: LIGHT, shape: "660,1225 706,1238 698,1272 705,1300 668,1330 655,1290" },
  { fill: LIGHT, shape: "705,1290 735,1292 735,1318 705,1312" },
  { fill: LIGHT, shape: "585,1282 600,1255 640,1225 662,1225 655,1258 630,1262 628,1285 600,1300" },
  { fill: LIGHT, shape: "620,1198 650,1186 642,1200 630,1208 632,1228 624,1225" },
  { fill: LIGHT, shape: "630,1268 655,1262 662,1325 620,1318 602,1302" },
  { fill: MID, shape: "722,1270 765,1265 772,1286 735,1290" },
  { fill: DARK, shape: "735,1292 770,1288 768,1304 748,1300" },
  { fill: DARK, shape: "745,1304 766,1306 752,1318" },
  { fill: MID, shape: "775,1295 822,1290 800,1310 775,1335 768,1325 778,1310" },
  { fill: MID, shape: "618,1320 665,1325 645,1348 628,1352" },
  { fill: TEAL, shape: "662,1335 700,1315 730,1322 720,1340 695,1358 642,1354" },
  { fill: LIGHT, shape: "545,1300 580,1305 600,1302 605,1335 575,1345 555,1322" },
  { fill: MID, shape: "505,1302 535,1300 545,1325 565,1340 550,1352 520,1350 508,1330" },
  { fill: DARK, shape: "556,1342 568,1348 562,1370 550,1362" },
  { fill: LIGHT, shape: "575,1348 608,1335 622,1365 600,1385 575,1420 560,1420 545,1395 568,1378" },
  { fill: LIGHT, shape: "455,1305 505,1300 508,1335 492,1365 455,1358 450,1330" },
  { fill: LIGHT, shape: "380,1340 430,1305 452,1305 448,1330 420,1352 385,1375 372,1362" },
  { fill: LIGHT, shape: "342,1388 372,1370 420,1352 450,1360 440,1375 385,1395 355,1402" },
  { fill: LIGHT, shape: "415,1412 450,1395 470,1380 520,1380 518,1405 490,1425 430,1440" },
  { fill: MID, shape: "308,1425 345,1403 352,1420 330,1440" },
  { fill: LIGHT, shape: "690,1150 700,1140 706,1150 694,1162" },
];

type Kind = "city" | "capital" | "country" | "state" | "province";
const LOOK: Record<Kind, { size: number; tone: string }> = {
  city: { size: 11, tone: "#7b7e80" },
  capital: { size: 12, tone: "#7b7e80" },
  country: { size: 14, tone: "#747779" },
  state: { size: 12, tone: "#747779" },
  province: { size: 10, tone: "#adb0b2" },
};

type Label = [tile: string, text: string, x: number, y: number, kind?: Kind, dotX?: number, dotY?: number];
const labels: Label[] = [
  ["a", "アンガルスク", 445, 123, "city", 445, 149],
  ["a", "ウラン・ウデ", 622, 180, "city", 622, 206],
  ["a", "チタ", 907, 163, "city", 907, 189],
  ["a", "新林区", 1433, 191, "city", 1433, 219],
  ["a", "松嶺区", 1429, 260, "city", 1429, 287],
  ["a", "スフバータル", 555, 301, "city", 555, 327],
  ["a", "エルデネト", 451, 391, "city", 451, 418],
  ["a", "ウランバートル", 591, 467, "capital", 591, 499],
  ["a", "フルンボイル市", 1209, 378, "city", 1209, 403],
  ["a", "バローン", 897, 523],
  ["a", "・オルト", 897, 560, "city", 897, 587],
  ["a", "アルシャン", 1219, 525, "city", 1219, 552],
  ["a", "チチハル市", 1412, 511, "city", 1412, 541],
  ["a", "モンゴル", 406, 575, "country"],
  ["a", "サインシャンド", 745, 684, "city", 745, 711],
  ["a", "白城市", 1359, 635, "city", 1359, 662],
  ["a", "ダランザドガド", 470, 771, "city", 470, 800],
  ["a", "内モンゴ", 1080, 757, "province"],
  ["a", "ル自治区", 1080, 793, "province"],
  ["a", "フレー旗", 1309, 828, "city", 1309, 855],
  ["a", "赤峰市", 1171, 858, "city", 1171, 884],
  ["a", "遼寧省", 1311, 926, "province"],
  ["a", "フフホト", 818, 950, "city", 818, 978],
  ["a", "市", 32, 996],
  ["a", "酒泉市", 183, 1021, "city", 183, 1048],
  ["a", "張掖市", 277, 1071, "city", 277, 1097],
  ["a", "銀川市", 556, 1097, "city", 556, 1125],
  ["a", "天津市", 1016, 1065, "city", 1085, 1088],
  ["a", "大連市", 1300, 1070, "city", 1300, 1099],
  ["a", "山西省", 856, 1128, "province"],
  ["a", "甘粛省", 366, 1140, "province"],
  ["a", "河北省", 1002, 1122, "province"],
  ["a", "寧夏回族", 545, 1192, "province"],
  ["a", "自治区", 545, 1225, "province"],
  ["a", "西寧市", 343, 1210, "city", 343, 1238],
  ["a", "邯鄲市", 955, 1210, "city", 955, 1238],
  ["a", "イ坊市", 1181, 1205, "city", 1181, 1232],
  ["a", "青海省", 70, 1277, "province"],
  ["a", "陝西省", 720, 1272, "province"],
  ["a", "山東省", 1134, 1276, "province"],
  ["a", "中華人民", 350, 1281, "country"],
  ["a", "共和国", 348, 1332, "country"],
  ["a", "ン", 298, 348],
  ["a", "ウリヤ", 56, 485],
  ["a", "アルタイ", 77, 582, "city", 77, 608],
  ["b", "黒河市", 174, 300, "city", 174, 328],
  ["b", "コムソモリスク", 632, 241],
  ["b", "=ナ=アムーレ", 632, 278, "city", 632, 303],
  ["b", "ハバロフスク", 539, 431, "city", 539, 458],
  ["b", "黒竜江省", 175, 513, "province"],
  ["b", "双鴨山市", 349, 561, "city", 349, 588],
  ["b", "ユジノ=サ", 908, 505],
  ["b", "ハリンスク", 908, 541, "city", 908, 566],
  ["b", "ハルビン市", 131, 623, "city", 131, 651],
  ["b", "稚内", 859, 649, "province"],
  ["b", "牡丹江市", 275, 703, "city", 275, 731],
  ["b", "長春市", 68, 750, "city", 68, 778],
  ["b", "ウラジオストク", 385, 803, "city", 385, 829],
  ["b", "吉林省", 154, 824, "province"],
  ["b", "朝鮮民主主義", 142, 989, "state"],
  ["b", "人民共和国", 142, 1030, "state"],
  ["b", "南浦市", 73, 1081, "city", 73, 1109],
  ["b", "ソウル特別市", 275, 1157, "capital", 149, 1181],
  ["b", "大韓民国", 206, 1244, "state"],
  ["b", "釜山広域市", 249, 1297, "city", 249, 1323],
  ["c", "天水市", 532, 42, "city", 532, 70],
  ["c", "西安市", 688, 60, "city", 688, 89],
  ["c", "鄭州市", 913, 30, "city", 913, 59],
  ["c", "徐州市", 1085, 60, "city", 1085, 89],
  ["c", "玉樹市", 112, 136, "city", 112, 161],
  ["c", "江蘇省", 1202, 117, "province"],
  ["c", "河南省", 906, 131, "province"],
  ["c", "阜陽市", 1019, 139, "city", 1019, 168],
  ["c", "広元市", 538, 166, "city", 538, 195],
  ["c", "十堰市", 778, 156, "city", 778, 183],
  ["c", "南京市", 1162, 188],
  ["c", "四川省", 378, 253, "province"],
  ["c", "南充市", 550, 259, "city", 550, 287],
  ["c", "湖北省", 866, 255, "province"],
  ["c", "安徽省", 1093, 271, "province"],
  ["c", "重慶市", 634, 319, "province"],
  ["c", "常徳市", 820, 357, "city", 820, 386],
  ["c", "南昌市", 1021, 377, "city", 1021, 405],
  ["c", "湖南省", 793, 431, "province"],
  ["c", "江西省", 1008, 470, "province"],
  ["c", "麗江市", 266, 476, "city", 266, 505],
  ["c", "貴州省", 586, 486, "province"],
  ["c", "福建省", 1125, 545, "province"],
  ["c", "保山市", 216, 571, "city", 216, 598],
  ["c", "昆明市", 388, 573, "city", 388, 602],
  ["c", "桂林市", 752, 561, "city", 752, 589],
  ["c", "雲南省", 318, 641, "province"],
  ["c", "広西チワン", 678, 657, "province"],
  ["c", "族自治区", 678, 693, "province"],
  ["c", "広東省", 935, 656, "province"],
  ["c", "普ジ市", 302, 690, "city", 302, 719],
  ["c", "ンダレー", 87, 736, "city", 67, 764],
  ["c", "北海市", 697, 760, "city", 697, 789],
  ["c", "マカオ", 912, 753],
  ["c", "ハノイ", 538, 783, "city", 538, 812],
  ["c", "海口市", 748, 834, "city", 748, 863],
  ["c", "ネピドー", 75, 846, "city", 67, 876],
  ["c", "ラオス", 382, 870, "country"],
  ["c", "海南省", 722, 907, "province"],
  ["c", "ヴィエンチャン", 383, 939, "capital", 383, 970],
  ["c", "ヤンゴン", 75, 999, "city", 72, 1028],
  ["c", "ダナン", 652, 1036, "city", 652, 1065],
  ["c", "タイ", 305, 1113, "country"],
  ["c", "ベトナム", 659, 1153, "country"],
  ["c", "カンボジア", 494, 1244, "country"],
  ["c", "ニャチャン", 700, 1228, "city", 700, 1255],
  ["c", "ーチ", 55, 385, "province"],
  ["c", "プラ", 55, 422, "province"],
  ["c", "ュ州", 55, 458, "province"],
  ["d", "フスク=カム", 238, 48],
  ["d", "チャツキー", 238, 83, "city", 238, 111],
];

const shaded: Label[] = [
  ["b", "札幌", 841, 805, "city", 841, 832],
  ["b", "釧路", 988, 812],
  ["b", "新潟", 731, 1133],
  ["b", "仙台", 818, 1115],
  ["b", "日本", 708, 1251, "capital"],
  ["b", "静岡", 700, 1308],
  ["b", "広島", 414, 1340],
  ["b", "福岡", 313, 1391],
];

const px = (n: number) => Math.round(n / 3);

const MapLabels = ({ items }: { items: Label[] }) => (
  <>
    {items.map(([tile, text, x, y, kind = "city", dx, dy]) => {
      const [ox, oy] = TILE[tile];
      const look = LOOK[kind];
      return (
        <g key={tile + text + y}>
          <MapText $tone={look.tone} fontSize={look.size} x={px(x + ox)} y={px(y + oy) - 1}>
            {text}
          </MapText>
          {dx !== undefined && dy !== undefined && (
            <circle cx={px(dx + ox)} cy={px(dy + oy)} r="1.500" fill="#77797b" />
          )}
        </g>
      );
    })}
  </>
);

const ChartMap = () => (
  <MapSvg viewBox="8 9 1392 852" role="img" aria-label="地図">
    <g transform="scale(0.333333)">
      <g fill="#f6f8f8">
        <path d={rough(mainland, 0.13, true)} />
        {islands.map((s, i) => <path key={i} d={rough(s, 0.12, true)} />)}
      </g>
      <g fill="#cacecf">
        {lakes.map((s, i) => <path key={i} d={rough(s, 0.14, true)} />)}
      </g>
      <g fill="none" stroke="#d9dbdc" strokeWidth="3.200" strokeLinejoin="round">
        {regions.map((s, i) => <path key={i} d={rough(s, 0.2)} />)}
      </g>
      <g fill="none" stroke="#c4c7c8" strokeWidth="6" strokeLinejoin="round">
        {borders.map((s, i) => <path key={i} d={rough(s, 0.14)} />)}
      </g>
      <path d="M860 27V2583M1945 27V2583M3032 27V2583" stroke="#e4e4e4" strokeOpacity="0.350" strokeWidth="3" />
    </g>
    <MapLabels items={labels} />
    <g transform="scale(0.333333)" stroke="#fff" strokeWidth="6" strokeLinejoin="round">
      {prefectures.map((p, i) => (
        <path key={i} d={rough(pts("b", p.shape), 0.04, true)} fill={p.fill} />
      ))}
    </g>
    <g opacity="0.500">
      <MapLabels items={shaded} />
    </g>
  </MapSvg>
);

/* ---------- Error dialog ---------- */

const Dialog = styled.section`
  position: absolute;
  top: 764px;
  left: 813px;
  width: 1199px;
  border: 1px solid rgba(0, 0, 0, 0.3);
  border-radius: 12px;
  background: #fff;
  background-clip: padding-box;
  box-shadow: 0 10px 40px rgba(0, 0, 0, 0.5), 0 6px 20px rgba(0, 0, 0, 0.2);
  line-height: 40px;
`;

const DialogHeader = styled.header`
  display: flex;
  align-items: center;
  gap: 16px;
  height: 130px;
  padding: 0 54px 6px;
  border-bottom: 2px solid #e2e2e2;
`;

const DialogTitle = styled.h2`
  margin: 0;
  padding-bottom: 2px;
  font-size: 39px;
  font-weight: 350;
  line-height: 48px;
`;

const DialogBody = styled.form`
  display: flex;
  flex-direction: column;
  padding: 44px 47px 30px 50px;
`;

const Message = styled.p`
  margin: 0;
  padding-left: 3px;
`;

const ErrorBox = styled.p`
  margin: 37px 4px 55px 0;
  padding: 22px 20px 20px;
  border: 2px solid #dedede;
  border-radius: 8px;
  background: #f2f2f2;
  box-shadow: inset 0 2px 3px rgba(0, 0, 0, 0.04);
`;

const DetailLink = styled.a`
  align-self: flex-start;
  padding-left: 2px;
  color: ${GREEN};
  text-decoration: none;
`;

const CommentLabel = styled.label`
  margin: 40px 0 8px;
`;

const CommentField = styled.div`
  position: relative;
  display: flex;
`;

const CommentInput = styled.textarea`
  width: 100%;
  height: 108px;
  padding: 13px 24px;
  border: 2px solid #c4c4c4;
  border-radius: 8px;
  box-shadow: inset 0 2px 3px rgba(0, 0, 0, 0.08);
  color: #444;
  line-height: 40px;
  resize: vertical;
  &::placeholder { color: #999; }
  &::-webkit-resizer { background: transparent; }
`;

const Grip = styled.svg`
  position: absolute;
  right: 4px;
  bottom: 4px;
  pointer-events: none;
`;

const DialogActions = styled.div`
  display: flex;
  justify-content: flex-end;
  gap: 10px;
  margin-top: 50px;
`;

const DialogButton = styled.button<{ $primary?: boolean }>`
  height: 68px;
  padding: 0 24px;
  border: 2px solid ${(p) => (p.$primary ? GREEN : "#c4c4c4")};
  border-radius: 8px;
  background: ${(p) => (p.$primary ? GREEN : "#fff")};
  color: ${(p) => (p.$primary ? "#fff" : "#333")};
`;

export default function App() {
  return (
    <Page lang="ja">
      <GlobalStyle />
      <TopBar>
        <SplitButton>
          <OutlineButton $gap={18}><RefreshIcon />リフレッシュ</OutlineButton>
          <SplitCaret aria-label="リフレッシュのメニュー"><CaretIcon /></SplitCaret>
        </SplitButton>
        <OutlineButton><PlayIcon />プレビュー</OutlineButton>
        <OutlineButton><SaveIcon />保存</OutlineButton>
        <Updated>最終更新日: 2/11/2026, 11:57:07 PM</Updated>
        <TopActions>
          <PublishSlot>
            <OutlineButton $gap={8}><UploadIcon />パブリッシュ</OutlineButton>
          </PublishSlot>
          <IconButton $tone="#777" aria-label="コメント"><CommentIcon /></IconButton>
          <IconButton $tone="#666" aria-label="ダウンロード"><DownloadIcon /></IconButton>
          <IconButton $tone="#555" aria-label="設定"><GearIcon /></IconButton>
          <IconButton $tone="#555" aria-label="情報"><InfoIcon /></IconButton>
          <IconButton $tone="#555" aria-label="ヘルプ"><HelpIcon /></IconButton>
        </TopActions>
      </TopBar>

      <Toolbar>
        <AddButton aria-label="追加"><PlusIcon /></AddButton>
        <Separator $after={22} />
        <ToolGroup $gap={30}>
          <IconButton aria-label="見出し"><HeadingIcon /><CaretIcon /></IconButton>
          <IconButton aria-label="太字"><BoldIcon /></IconButton>
          <IconButton aria-label="斜体"><ItalicIcon /></IconButton>
          <IconButton aria-label="取り消し線"><StrikeIcon /></IconButton>
          <IconButton aria-label="色"><PaletteIcon /><CaretIcon /></IconButton>
        </ToolGroup>
        <Separator />
        <ToolGroup>
          <IconButton aria-label="箇条書き"><BulletsIcon /></IconButton>
          <IconButton aria-label="番号付きリスト"><NumbersIcon /></IconButton>
        </ToolGroup>
        <Separator />
        <ToolGroup>
          <IconButton aria-label="リンク"><LinkIcon /></IconButton>
          <IconButton aria-label="コード"><CodeIcon /></IconButton>
          <IconButton aria-label="引用"><QuoteIcon /></IconButton>
        </ToolGroup>
        <Separator />
        <IconButton aria-label="列"><ColumnsIcon /></IconButton>
        <Separator />
        <IconButton aria-label="キーボード"><KeyboardIcon /></IconButton>
        <Separator $after={34} />
        <AiButton>
          <RobotIcon />
          <span><strong>AI</strong> エディター</span>
        </AiButton>
        <SearchSlot>
          <IconButton aria-label="検索"><SearchIcon /></IconButton>
        </SearchSlot>
      </Toolbar>

      <Canvas>
        <ChartFrame>
          <ChartMap />
          <ZoomControl>
            <ZoomButton aria-label="拡大">
              <Icon w={26} h={26} sw={0}><path fill="#000" d="M10.500 0h5v10.500H26v5H15.500V26h-5V15.500H0v-5h10.500z" /></Icon>
            </ZoomButton>
            <ZoomButton aria-label="縮小">
              <Icon w={26} h={26} sw={0}><path fill="#000" d="M0 10.500h26v5H0z" /></Icon>
            </ZoomButton>
          </ZoomControl>
          <MapHint>Hover over or click an area.</MapHint>
          <SizeBubble>
            {sizes.map((s) => (
              <BubbleButton key={s.name} aria-label={s.name} $active={s.active}>
                <Bar $w={s.bar} $h={4} />
                <Bar $w={s.box} $h={s.h} />
                <Bar $w={s.bar} $h={4} />
              </BubbleButton>
            ))}
            <BubbleRule />
            <BubbleButton aria-label="枠線"><FrameGlyph /></BubbleButton>
          </SizeBubble>
        </ChartFrame>
      </Canvas>

      <Dialog role="dialog" aria-labelledby="error-title">
        <DialogHeader>
          <CrossIcon />
          <DialogTitle id="error-title">エラー</DialogTitle>
        </DialogHeader>
        <DialogBody onSubmit={(e) => e.preventDefault()}>
          <Message>エラーが発生しました。</Message>
          <ErrorBox>Exporting chart failed. Chart image data is empty.</ErrorBox>
          <DetailLink href="#details">エラーの詳細を表示</DetailLink>
          <CommentLabel htmlFor="comment">コメント</CommentLabel>
          <CommentField>
            <CommentInput id="comment" placeholder="どのような経緯でエラーになったのか教えてください。" />
            <Grip width="14" height="14" viewBox="0 0 14 14" stroke="#555" strokeWidth="1.500" aria-hidden="true">
              <path d="M0 14L14 0M7 14l7-7" />
            </Grip>
          </CommentField>
          <DialogActions>
            <DialogButton type="submit" $primary>AIに聞く</DialogButton>
            <DialogButton type="button">閉じる</DialogButton>
          </DialogActions>
        </DialogBody>
      </Dialog>
    </Page>
  );
}
